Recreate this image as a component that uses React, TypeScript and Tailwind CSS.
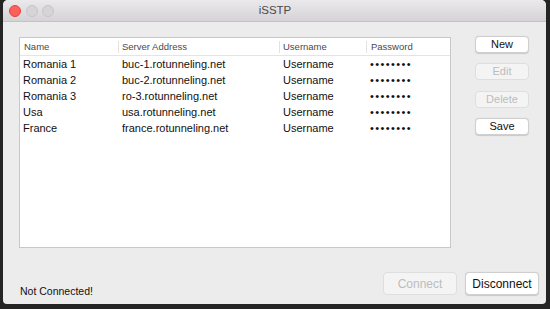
import React from "react";

const rows = [
  ["Romania 1", "buc-1.rotunneling.net"],
  ["Romania 2", "buc-2.rotunneling.net"],
  ["Romania 3", "ro-3.rotunneling.net"],
  ["Usa", "usa.rotunneling.net"],
  ["France", "france.rotunneling.net"],
];

function SideButton({ label, disabled }: { label: string; disabled?: boolean }) {
  return (
    <div
      className={
        "w-[54px] h-[17px] flex items-center justify-center rounded-[4px] text-[11px] leading-none " +
        (disabled
          ? "bg-[#f4f4f4] text-[#bcbcbc] border border-[#dedede]"
          : "bg-white text-[#111] border border-[#cfcfcf] shadow-[0_0.5px_1px_rgba(0,0,0,0.15)]")
      }
    >
      {label}
    </div>
  );
}

export default function App() {
  return (
    <div
      className="w-[550px] h-[309px] bg-[#242424] pl-[3px] overflow-hidden"
      style={{ fontFamily: '"Liberation Sans", Arial, sans-serif' }}
    >
      <div className="w-[543px] h-[304px] bg-[#ececec] rounded-t-[5px] rounded-b-[4px] flex flex-col overflow-hidden">
        {/* title bar */}
        <div className="h-[22px] shrink-0 bg-gradient-to-b from-[#ebe9eb] to-[#d5d3d5] border-b border-[#c4c2c4] relative flex items-center justify-center">
          <div className="absolute left-[6px] top-[5px] flex gap-[4.5px]">
            <div className="w-[12px] h-[12px] rounded-full bg-[#fc605c] border border-[#e2463f]" />
            <div className="w-[12px] h-[12px] rounded-full bg-[#d6d4d6] border border-[#c6c4c6]" />
            <div className="w-[12px] h-[12px] rounded-full bg-[#d6d4d6] border border-[#c6c4c6]" />
          </div>
          <span className="text-[11.5px] text-[#4a4a4a] pl-[1px] pt-[1px]">iSSTP</span>
        </div>

        {/* content */}
        <div className="flex-1 flex flex-col">
          <div className="flex pl-[16px] pt-[15px]">
            <div className="w-[432px] h-[211px] bg-white border border-[#c8c8c8]">
              <div className="flex h-[18px] border-b border-[#e4e4e4] text-[9.5px] text-[#4a4a4a] pt-[1px]">
                <div className="w-[98px] flex items-center pl-[4px]">Name</div>
                <div className="w-[161px] flex items-center pl-[3px] border-l border-[#e2e2e2] my-[2px]">Server Address</div>
                <div className="w-[87px] flex items-center pl-[3px] border-l border-[#e2e2e2] my-[2px]">Username</div>
                <div className="flex-1 flex items-center pl-[4px] border-l border-[#e2e2e2] my-[2px]">Password</div>
              </div>
              <div>
                {rows.map(([n, s]) => (
                  <div key={n} className="flex h-[16px] items-center text-[11px] text-[#111]">
                    <div className="w-[98px] pl-[3px]">{n}</div>
                    <div className="w-[161px] pl-[4px]">{s}</div>
                    <div className="w-[87px] pl-[4px]">Username</div>
                    <div className="flex-1 pl-[4px] text-[11px] tracking-[1.4px]">••••••••</div>
                  </div>
                ))}
              </div>
            </div>
            <div className="ml-[24px] -mt-[1px] flex flex-col gap-[10px]">
              <SideButton label="New" />
              <SideButton label="Edit" disabled />
              <div className="mt-[1px]">
                <SideButton label="Delete" disabled />
              </div>
              <SideButton label="Save" />
            </div>
          </div>
          <div className="flex-1" />
          <div className="flex items-end pl-[17px] pr-[7px] pb-[9px]">
            <div className="text-[10.5px] text-[#111] -mb-[3px] leading-[14px]">Not Connected!</div>
            <div className="flex-1" />
            <div className="w-[74px] h-[23px] flex items-center justify-center rounded-[4px] bg-[#f4f4f4] border border-[#dedede] text-[12px] text-[#bcbcbc]">
              Connect
            </div>
            <div className="ml-[8px] w-[74px] h-[23px] flex items-center justify-center rounded-[4px] bg-white border border-[#cfcfcf] shadow-[0_0.5px_1px_rgba(0,0,0,0.15)] text-[12px] text-[#111]">
              Disconnect
            </div>
          </div>
        </div>
      </div>
    </div>
  );
}
